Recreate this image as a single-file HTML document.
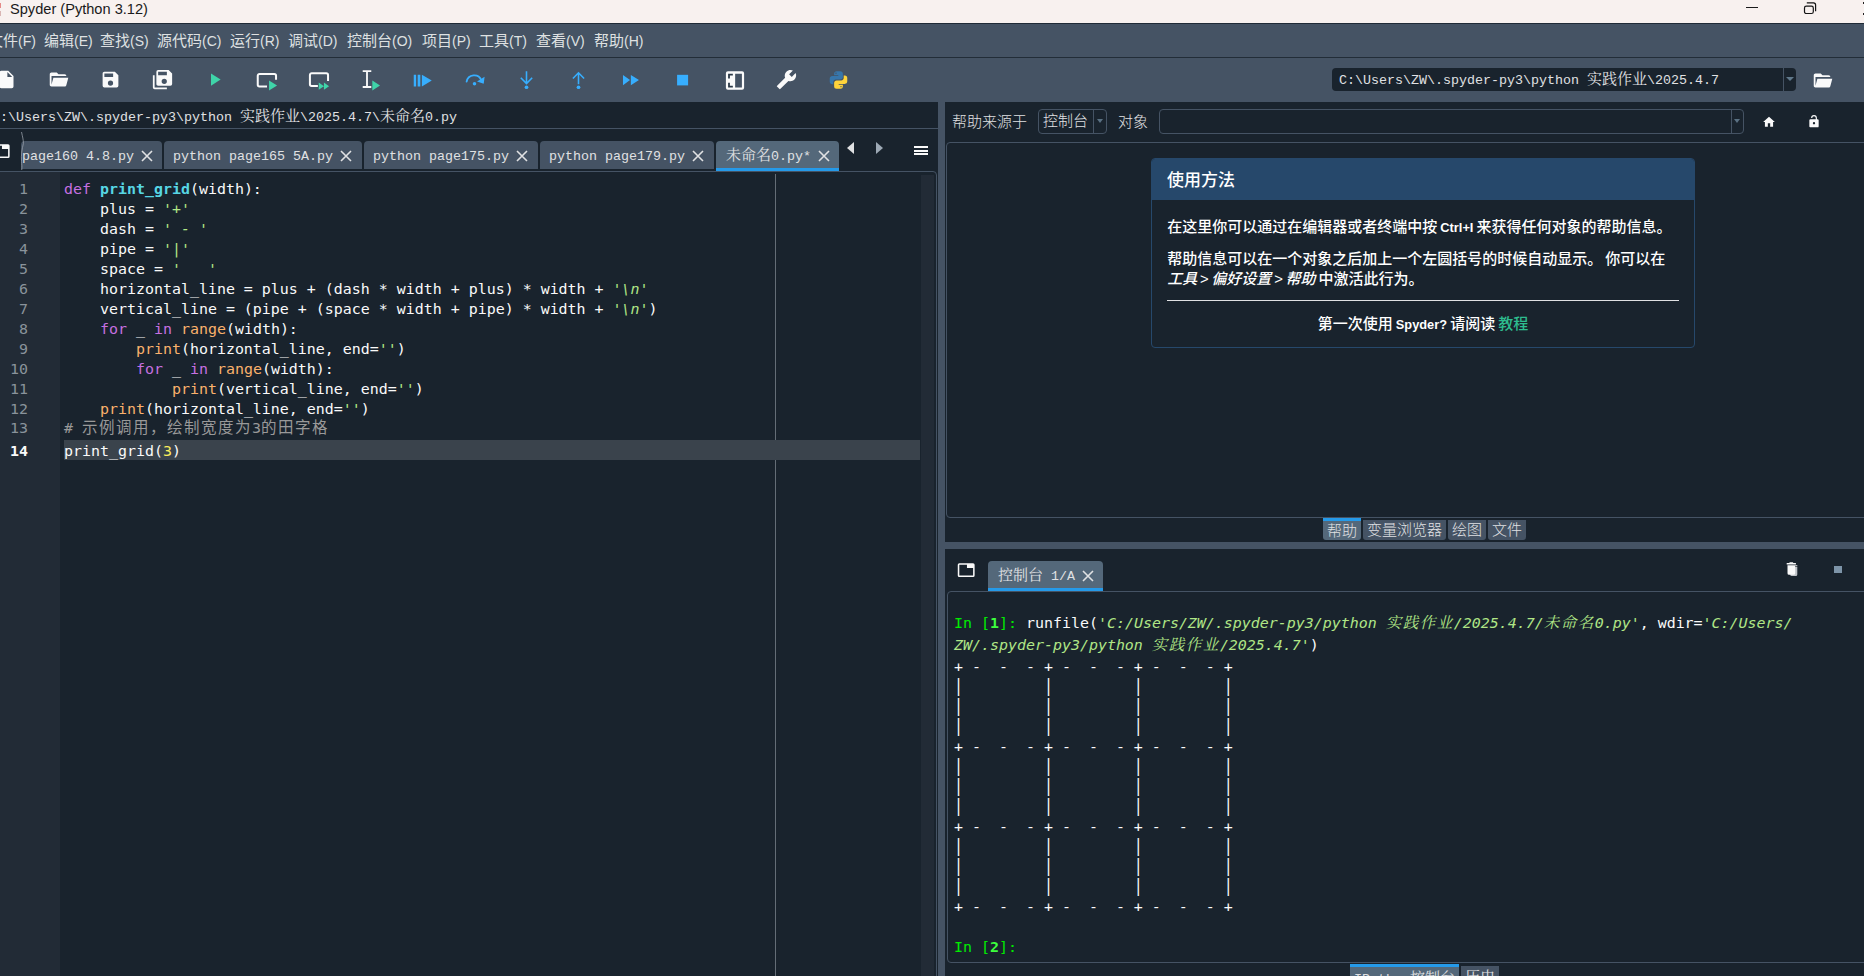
<!DOCTYPE html>
<html lang="zh-CN">
<head>
<meta charset="utf-8">
<title>Spyder (Python 3.12)</title>
<style>
*{box-sizing:border-box;margin:0;padding:0}
html,body{width:1864px;height:976px;overflow:hidden;background:#19232d}
body{position:relative;font-family:"Liberation Sans","Noto Sans CJK SC",sans-serif;color:#e0e1e3}
.abs{position:absolute}
svg{display:block;overflow:visible}
.tab{top:39px;height:28px;background:#455364;border-radius:4px 4px 0 0}
.tab.act{background:#54687a;height:30px;border-bottom:3px solid #259ae9}
.tab .sim{position:absolute;top:1px;line-height:30px}
.tab .x{position:absolute;top:9px;width:12px;height:12px;stroke:#e0e1e3;stroke-width:1.600;fill:none}
#ln{left:0;top:1px;width:28px;color:#8a939b;text-align:right}
#ln div{position:absolute;right:0;height:20px;line-height:20px}
#ln .cur{color:#fafafa;font-weight:bold}
#code{left:64px;top:1px;color:#fafafa}
#code div{position:absolute;left:0;height:20px;line-height:20px}
.k{color:#c670e0}.f{color:#57d6e4;font-weight:bold}.s{color:#b0e686;font-style:italic}.b{color:#fab16c}.n{color:#faed5c}.c{color:#999}
.cj{font-size:15.500px;letter-spacing:1.500px}
/* title bar */
#title{left:0;top:0;width:1864px;height:23px;background:#f8f1ef;color:#1a1a1a}
#title .t{left:10px;top:0;font-size:14.6px;line-height:19px;white-space:nowrap}
/* menubar */
#menubar{left:0;top:23px;width:1864px;height:34px;background:#455364;border-top:1px solid #202b37}
#menubar span{position:absolute;top:-0.500px;line-height:34px;font-size:15px;white-space:nowrap;color:#dfe1e2}
#menubar i{font-style:normal;font-size:14px}
#mline{left:0;top:57px;width:1864px;height:1px;background:#222d38}
#toolbar{left:0;top:58px;width:1864px;height:44px;background:#455364}
.ico{position:absolute;top:11.5px;width:21px;height:21px}
/* simsun-like */
.sim{font-family:"Liberation Mono","Noto Serif CJK SC",monospace;font-size:13.33px;white-space:pre;color:#e0e1e3}
.sim b{font-weight:normal;font-size:15px}
/* code */
.mono{font-family:"DejaVu Sans Mono","Noto Sans CJK SC",monospace;font-size:14.95px;white-space:pre}
.ui{font-size:15px;color:#e0e1e3;white-space:nowrap;font-weight:300}
.yh{font-size:15px;color:#fff;white-space:nowrap;font-weight:500;word-spacing:-1px}
.yh .lat{font-size:12.800px;font-weight:bold}
.yh i{font-style:italic}
.btab{height:20px;background:#455364;color:#e0e1e3;font-size:15px;line-height:20px;font-weight:300;text-align:center;white-space:nowrap;border-radius:0 0 3px 3px}
.btab.act{background:#54687a;height:22px;border-top:3px solid #259ae9;line-height:20px}
.btab .sim{line-height:20px;position:relative;top:1.300px}
#con{left:9px;top:0;color:#fafafa}
#con div{position:absolute;left:0;height:20px;line-height:20px}
#con .pr{transform:translateY(-1.000px) scaleY(1.120)}
#con .cj{font-family:"Noto Serif CJK SC",serif;line-height:0}
#con .p{color:#00ec00}
#con .p b{color:#3dff3d}
#con .s{color:#b0e686;font-style:italic}
</style>
</head>
<body>
<!-- TITLE -->
<div id="title" class="abs">
  <div class="abs" style="left:0;top:3px;width:1.200px;height:5px;background:#e58a88"></div>
  <div class="abs" style="left:0;top:11px;width:1.200px;height:5px;background:#d9b5b3"></div>
  <div class="abs t">Spyder (Python 3.12)</div>
  <div class="abs" style="left:1746px;top:7px;width:12px;height:1px;background:#1a1a1a"></div>
  <svg class="abs" style="left:1803px;top:2px" width="14" height="13" viewBox="0 0 14 13" fill="none" stroke="#141414" stroke-width="1.200"><rect x="1.500" y="4.100" width="8.800" height="7.400" rx="1.800"/><path d="M3.800,0.800H10.500A2.100,2.100 0 0,1 12.600,2.900V9.300"/></svg>
  <div class="abs" style="left:1862.500px;top:2px;width:1.500px;height:2px;background:#222"></div><div class="abs" style="left:1862.500px;top:12.500px;width:1.500px;height:2px;background:#222"></div>
</div>
<!-- MENUBAR -->
<div id="menubar" class="abs">
  <span style="left:-12px">文件<i>(F)</i></span>
  <span style="left:44px">编辑<i>(E)</i></span>
  <span style="left:100px">查找<i>(S)</i></span>
  <span style="left:157px">源代码<i>(C)</i></span>
  <span style="left:230px">运行<i>(R)</i></span>
  <span style="left:288px">调试<i>(D)</i></span>
  <span style="left:347px">控制台<i>(O)</i></span>
  <span style="left:422px">项目<i>(P)</i></span>
  <span style="left:479px">工具<i>(T)</i></span>
  <span style="left:536px">查看<i>(V)</i></span>
  <span style="left:594px">帮助<i>(H)</i></span>
</div>
<div id="mline" class="abs"></div>
<!-- TOOLBAR -->
<div id="toolbar" class="abs">
<!--TB-START-->
<!-- file -->
<svg class="ico" style="margin-top:-0.400px;left:-4px" viewBox="0 0 24 24" fill="#fafafa"><path d="M13,9V3.5L18.5,9M6,2C4.89,2 4,2.89 4,4V20A2,2 0 0,0 6,22H18A2,2 0 0,0 20,20V8L14,2H6Z"/></svg>
<!-- open -->
<svg class="ico" style="margin-top:-0.400px;left:48px" viewBox="0 0 24 24" fill="#fafafa"><path d="M19,20H4C2.89,20 2,19.1 2,18V6C2,4.89 2.89,4 4,4H10L12,6H19A2,2 0 0,1 21,8H21L4,8V18L6.14,10H23.21L20.93,18.5C20.7,19.37 19.92,20 19,20Z"/></svg>
<!-- save -->
<svg class="ico" style="margin-top:-0.400px;left:100px" viewBox="0 0 24 24" fill="#fafafa"><path d="M15,9H5V5H15M12,19A3,3 0 0,1 9,16A3,3 0 0,1 12,13A3,3 0 0,1 15,16A3,3 0 0,1 12,19M17,3H5C3.89,3 3,3.9 3,5V19A2,2 0 0,0 5,21H19A2,2 0 0,0 21,19V7L17,3Z"/></svg>
<!-- save all -->
<svg class="ico" style="margin-top:-0.400px;left:152px" viewBox="0 0 24 24" fill="#fafafa"><path d="M17,7V3H7V7H17M14,17A3,3 0 0,0 17,14A3,3 0 0,0 14,11A3,3 0 0,0 11,14A3,3 0 0,0 14,17M19,1L23,5V17A2,2 0 0,1 21,19H7C5.89,19 5,18.1 5,17V3A2,2 0 0,1 7,1H19M1,7H3V21H17V23H3A2,2 0 0,1 1,21V7Z"/></svg>
<!-- run -->
<svg class="ico" style="margin-top:-0.400px;left:204px" viewBox="0 0 24 24" fill="#3fd4a9"><path d="M8,5.14V19.14L19,12.14L8,5.14Z"/></svg>
<!-- run cell -->
<svg class="ico" style="left:256px" viewBox="0 0 24 24"><path d="M12.600,18.850H4A2,2 0 0,1 2,16.850V6.650A2,2 0 0,1 4,4.650H20.900A2,2 0 0,1 22.900,6.650V11.200" fill="none" stroke="#fafafa" stroke-width="2.300"/><path d="M14.900,12V23.300L24.100,17.650Z" fill="#3fd4a9"/></svg>
<!-- run cell advance -->
<svg class="ico" style="left:308px" viewBox="0 0 24 24"><path d="M11.300,18.150H4.200A2,2 0 0,1 2.200,16.150V5.750A2,2 0 0,1 4.200,3.750H20.900A2,2 0 0,1 22.900,5.750V12.700" fill="none" stroke="#fafafa" stroke-width="2.300"/><path d="M12.300,14.400V22.700L18.200,18.550ZM18.200,14.400V22.700L24.100,18.550Z" fill="#3fd4a9"/></svg>
<!-- run selection -->
<svg class="ico" style="left:360px" viewBox="0 0 24 24"><path d="M3.100,1.300H12.900M3.100,19.400H12.900M8,1.300V19.400" fill="none" stroke="#fafafa" stroke-width="2.100"/><path d="M14.100,11.900V23.300L22.900,17.600Z" fill="#3fd4a9"/></svg>
<!-- debug -->
<svg class="ico" style="left:412px" viewBox="0 0 24 24" fill="#37aefe"><path d="M2,5.3H4.700V18.900H2ZM6.500,5.3H9.500V18.900H6.500ZM11.300,5.3V18.900L22.600,12.100Z"/></svg>
<!-- step over -->
<svg class="ico" style="left:464px" viewBox="0 0 24 24"><path d="M3,13.300A8.800,8.800 0 0,1 19.800,11.600" fill="none" stroke="#37aefe" stroke-width="2.100" stroke-linecap="round"/><path d="M23.500,7.600L22.500,15.600L14.900,13Z" fill="#37aefe"/><circle cx="12" cy="15.800" r="2" fill="#37aefe"/></svg>
<!-- step into -->
<svg class="ico" style="left:516px" viewBox="0 0 24 24"><path d="M12,1.300V15.600M5.500,8.900L12,15.600L18.500,8.900" fill="none" stroke="#37aefe" stroke-width="1.800"/><circle cx="12" cy="19.700" r="2.100" fill="#37aefe"/></svg>
<!-- step out -->
<svg class="ico" style="left:568px" viewBox="0 0 24 24"><path d="M12,16.400V3.200M5.600,9.800L12,3.200L18.400,9.800" fill="none" stroke="#37aefe" stroke-width="1.800"/><circle cx="12" cy="19.700" r="2.100" fill="#37aefe"/></svg>
<!-- continue -->
<svg class="ico" style="left:620px" viewBox="0 0 24 24" fill="#37aefe"><path d="M3.400,5.600V17.400L11.500,11.500ZM12.400,5.600V17.400L21.700,11.500Z"/></svg>
<!-- stop -->
<svg class="ico" style="left:672px" viewBox="0 0 24 24" fill="#37aefe"><path d="M5.800,5.500H18.400V17.600H5.800Z"/></svg>
<!-- maximize pane -->
<svg class="ico" style="left:724px" viewBox="0 0 24 24"><path fill-rule="evenodd" fill="#fafafa" d="M4.470,1.540H20.670A2.300,2.300 0 0,1 22.970,3.840V20.160A2.300,2.300 0 0,1 20.670,22.460H4.470A2.300,2.300 0 0,1 2.170,20.160V3.840A2.300,2.300 0 0,1 4.470,1.540ZM12.740,4.170V20H20.460V4.170Z"/><path fill="#2b3947" d="M4.690,4.170H10.110V6.290H6.740V9.600H4.690ZM4.690,20H10.110V17.890H6.740V14.500H4.690Z"/></svg>
<!-- wrench (mirrored) -->
<svg class="ico" style="margin-top:-0.400px;left:776px" viewBox="0 0 24 24" fill="#fafafa"><g transform="translate(24,0) scale(-1,1)"><path d="M22.700,19L13.600,9.900C14.500,7.600 14,4.900 12.100,3C10.100,1 7.100,0.600 4.700,1.700L9,6L6,9L1.600,4.700C0.400,7.100 0.900,10.100 2.900,12.100C4.800,14 7.500,14.500 9.800,13.600L18.900,22.700C19.300,23.100 19.900,23.100 20.300,22.700L22.600,20.400C23.100,20 23.100,19.300 22.700,19Z"/></g></svg>
<!-- python -->
<svg class="ico" style="margin-top:-0.400px;left:828px" viewBox="0 0 24 24"><path fill="#ffd43b" d="M19.140,7.500A2.860,2.860 0 0,1 22,10.360V14.140A2.860,2.860 0 0,1 19.140,17H12C12,17.390 12.320,17.960 12.710,17.960H17V19.640A2.860,2.860 0 0,1 14.140,22.500H9.860A2.860,2.860 0 0,1 7,19.640V15.890C7,14.310 8.280,13.040 9.860,13.040H15.110C16.690,13.040 17.960,11.760 17.960,10.180V7.500H19.140M14.860,19.290C14.460,19.290 14.140,19.590 14.140,20.180C14.140,20.770 14.460,20.890 14.860,20.890A0.710,0.710 0 0,0 15.570,20.180C15.570,19.590 15.250,19.290 14.860,19.290Z"/><path fill="#3776ab" d="M4.860,17.500C3.280,17.500 2,16.220 2,14.640V10.860C2,9.280 3.280,8 4.860,8H12C12,7.610 11.680,7.040 11.290,7.040H7V5.360C7,3.780 8.280,2.500 9.860,2.500H14.140C15.720,2.500 17,3.780 17,5.360V9.110C17,10.690 15.720,11.960 14.140,11.960H8.890C7.310,11.960 6.040,13.240 6.040,14.820V17.500H4.860M9.140,5.710C9.540,5.710 9.860,5.410 9.860,4.820C9.860,4.230 9.540,4.110 9.140,4.110C8.750,4.110 8.430,4.230 8.430,4.820C8.430,5.410 8.750,5.710 9.140,5.710Z"/></svg>
<!-- working dir combo -->
<div class="abs" style="left:1332px;top:10px;width:464px;height:23px;background:#19232d;border-radius:4px"></div>
<div class="abs" style="left:1783px;top:10px;width:1px;height:23px;background:#455364"></div>
<div class="abs" style="left:1786px;top:19px;width:0;height:0;border-left:4px solid transparent;border-right:4px solid transparent;border-top:4px solid #60798b"></div>
<div class="abs sim" style="left:1339px;top:11px;line-height:23px">C:\Users\ZW\.spyder-py3\python <b>实践作业</b>\2025.4.7</div>
<svg class="abs" style="left:1811.500px;top:11.500px;width:21px;height:21px" viewBox="0 0 24 24" fill="#fafafa"><path d="M19,20H4C2.890,20 2,19.100 2,18V6C2,4.890 2.890,4 4,4H10L12,6H19A2,2 0 0,1 21,8H21L4,8V18L6.140,10H23.210L20.930,18.500C20.700,19.370 19.920,20 19,20Z"/></svg>
<!--TB-END-->
</div>
<!-- EDITOR PANE -->
<div id="editor" class="abs" style="left:0;top:102px;width:938px;height:874px">
<!--ED-START-->
<!-- path bar -->
<div class="abs sim" style="left:-8px;top:4.500px;line-height:22px">C:\Users\ZW\.spyder-py3\python <b>实践作业</b>\2025.4.7\<b>未命名</b>0.py</div>
<div class="abs" style="left:0;top:26px;width:938px;height:1px;background:#455364"></div>
<!-- tab bar -->
<svg class="abs" style="left:-8.400px;top:39.500px;width:18.400px;height:18.400px" viewBox="0 0 24 24" fill="#fafafa"><path d="M21,3H3A2,2 0 0,0 1,5V19A2,2 0 0,0 3,21H21A2,2 0 0,0 23,19V5A2,2 0 0,0 21,3M21,19H3V5H13V9H21V19Z"/></svg>
<div class="abs tab" style="left:21px;width:141px"><span class="sim" style="left:1px">page160 4.8.py</span><svg class="x" style="left:120px" viewBox="0 0 12 12"><path d="M1,1L11,11M11,1L1,11"/></svg></div>
<svg class="abs" style="left:19px;top:30px;overflow:hidden" width="6" height="38" viewBox="0 0 6 40"><path d="M2.500,0C3.500,5 4.500,8 4.500,12C3,18 2,24 2.500,31C2.800,34 3.200,37 2.700,40" fill="none" stroke="#9aa3ac" stroke-width="0.8"/></svg>
<div class="abs tab" style="left:164px;width:198px"><span class="sim" style="left:9px">python page165 5A.py</span><svg class="x" style="left:176px" viewBox="0 0 12 12"><path d="M1,1L11,11M11,1L1,11"/></svg></div>
<div class="abs tab" style="left:364px;width:174px"><span class="sim" style="left:9px">python page175.py</span><svg class="x" style="left:152px" viewBox="0 0 12 12"><path d="M1,1L11,11M11,1L1,11"/></svg></div>
<div class="abs tab" style="left:540px;width:174px"><span class="sim" style="left:9px">python page179.py</span><svg class="x" style="left:152px" viewBox="0 0 12 12"><path d="M1,1L11,11M11,1L1,11"/></svg></div>
<div class="abs tab act" style="left:716px;width:123px"><span class="sim" style="left:10px"><b>未命名</b>0.py*</span><svg class="x" style="left:102px" viewBox="0 0 12 12"><path d="M1,1L11,11M11,1L1,11"/></svg></div>
<div class="abs" style="left:847px;top:40px;width:0;height:0;border-top:6.500px solid transparent;border-bottom:6.500px solid transparent;border-right:7.500px solid #e0e1e3"></div>
<div class="abs" style="left:876px;top:40px;width:0;height:0;border-top:6.500px solid transparent;border-bottom:6.500px solid transparent;border-left:7.500px solid #9da9b5"></div>
<div class="abs" style="left:914px;top:43.700px;width:14px;height:2px;background:#fafafa"></div>
<div class="abs" style="left:914px;top:47.500px;width:14px;height:2px;background:#fafafa"></div>
<div class="abs" style="left:914px;top:51.300px;width:14px;height:2px;background:#fafafa"></div>
<!-- editor frame -->
<div class="abs" style="left:-4px;top:69px;width:941px;height:812px;border:1px solid #455364;border-radius:4px"></div>
<div class="abs" style="left:0;top:70px;width:60px;height:804px;background:#222b36"></div>
<div class="abs" style="left:921px;top:73px;width:13px;height:801px;background:#222b36"></div>
<div class="abs" style="left:775px;top:72px;width:1px;height:802px;background:#646d76"></div>
<div class="abs" style="left:64px;top:338px;width:856px;height:20px;background:#3a434c"></div>
<div id="ln" class="abs mono">
<div style="top:76px">1</div><div style="top:96px">2</div><div style="top:116px">3</div><div style="top:136px">4</div><div style="top:156px">5</div><div style="top:176px">6</div><div style="top:196px">7</div><div style="top:216px">8</div><div style="top:236px">9</div><div style="top:256px">10</div><div style="top:276px">11</div><div style="top:296px">12</div><div style="top:315px">13</div><div class="cur" style="top:338px">14</div>
</div>
<div id="code" class="abs mono">
<div style="top:76px"><span class="k">def</span> <span class="f">print_grid</span>(width):</div>
<div style="top:96px">    plus = <span class="s">'+'</span></div>
<div style="top:116px">    dash = <span class="s">' - '</span></div>
<div style="top:136px">    pipe = <span class="s">'|'</span></div>
<div style="top:156px">    space = <span class="s">'   '</span></div>
<div style="top:176px">    horizontal_line = plus + (dash * width + plus) * width + <span class="s">'\n'</span></div>
<div style="top:196px">    vertical_line = (pipe + (space * width + pipe) * width + <span class="s">'\n'</span>)</div>
<div style="top:216px">    <span class="k">for</span> _ <span class="k">in</span> <span class="b">range</span>(width):</div>
<div style="top:236px">        <span class="b">print</span>(horizontal_line, end=<span class="s">''</span>)</div>
<div style="top:256px">        <span class="k">for</span> _ <span class="k">in</span> <span class="b">range</span>(width):</div>
<div style="top:276px">            <span class="b">print</span>(vertical_line, end=<span class="s">''</span>)</div>
<div style="top:296px">    <span class="b">print</span>(horizontal_line, end=<span class="s">''</span>)</div>
<div class="c" style="top:315px"># <span class="cj">示例调用，绘制宽度为</span>3<span class="cj">的田字格</span></div>
<div style="top:338px">print_grid(<span class="n">3</span>)</div>
</div>
<!--ED-END-->
</div>
<!-- vertical splitter -->
<div class="abs" style="left:938px;top:102px;width:7px;height:874px;background:#455364"></div>
<!-- HELP PANE -->
<div id="help" class="abs" style="left:945px;top:102px;width:919px;height:439px">
<!--HELP-START-->
<!-- help toolbar -->
<div class="abs ui" style="left:7px;top:7px;line-height:26px">帮助来源于</div>
<div class="abs" style="left:93px;top:7px;width:69px;height:25px;border:1px solid #455364;border-radius:4px"></div>
<div class="abs ui" style="left:98px;top:6px;line-height:26px">控制台</div>
<div class="abs" style="left:148px;top:8px;width:1px;height:23px;background:#455364"></div>
<div class="abs" style="left:151.500px;top:17px;width:0;height:0;border-left:3.800px solid transparent;border-right:3.800px solid transparent;border-top:4px solid #5a7183"></div>
<div class="abs ui" style="left:173px;top:7px;line-height:26px">对象</div>
<div class="abs" style="left:214px;top:7px;width:585px;height:25px;border:1px solid #455364;border-radius:4px"></div>
<div class="abs" style="left:786px;top:8px;width:1px;height:23px;background:#455364"></div>
<div class="abs" style="left:788.500px;top:17px;width:0;height:0;border-left:3.800px solid transparent;border-right:3.800px solid transparent;border-top:4px solid #5a7183"></div>
<svg class="abs" style="left:817px;top:13px;width:14px;height:14px" viewBox="0 0 24 24" fill="#fafafa"><path d="M10,20V14H14V20H19V12H22L12,3L2,12H5V20H10Z"/></svg>
<svg class="abs" style="left:862px;top:12px;width:14px;height:15px" viewBox="0 0 24 24" fill="#fafafa"><path d="M18,8A2,2 0 0,1 20,10V20A2,2 0 0,1 18,22H6C4.890,22 4,21.100 4,20V10A2,2 0 0,1 6,8H15V6A3,3 0 0,0 12,3A3,3 0 0,0 9,6H7A5,5 0 0,1 12,1A5,5 0 0,1 17,6V8H18M12,17A2,2 0 0,0 14,15A2,2 0 0,0 12,13A2,2 0 0,0 10,15A2,2 0 0,0 12,17Z"/></svg>
<!-- help frame -->
<div class="abs" style="left:1px;top:40px;width:930px;height:376px;border:1px solid #455364;border-radius:4px"></div>
<!-- card -->
<div class="abs" style="left:206px;top:56px;width:544px;height:190px;border:1px solid #26486b;border-radius:4px;overflow:hidden">
  <div class="abs" style="left:0;top:0;width:544px;height:41px;background:#26486b"></div>
  <div class="abs yh" style="left:15px;top:10px;font-size:17px;line-height:24px;font-weight:500">使用方法</div>
  <div class="abs yh" style="left:15.200px;top:58px;line-height:20px">在这里你可以通过在编辑器或者终端中按 <b class="lat">Ctrl+I</b> 来获得任何对象的帮助信息。</div>
  <div class="abs yh" style="left:15.200px;top:90px;line-height:20px">帮助信息可以在一个对象之后加上一个左圆括号的时候自动显示。 你可以在<br><i style="word-spacing:-1.500px">工具 &gt; 偏好设置 &gt; 帮助</i> 中激活此行为。</div>
  <div class="abs" style="left:15px;top:141px;width:512px;height:1px;background:#e0e1e3"></div>
  <div class="abs yh" style="left:0;top:155px;width:542px;text-align:center;line-height:20px">第一次使用 <b class="lat">Spyder?</b> 请阅读 <span style="color:#2ebd8f">教程</span></div>
</div>
<!-- bottom tabs -->
<div class="abs btab act" style="left:378px;top:416px;width:38px">帮助</div>
<div class="abs btab" style="left:418px;top:418px;width:83px">变量浏览器</div>
<div class="abs btab" style="left:503px;top:418px;width:38px">绘图</div>
<div class="abs btab" style="left:543px;top:418px;width:38px">文件</div>
<!--HELP-END-->
</div>
<!-- horizontal splitter -->
<div class="abs" style="left:945px;top:542px;width:919px;height:7px;background:#455364"></div>
<!-- CONSOLE PANE -->
<div id="console" class="abs" style="left:945px;top:548px;width:919px;height:428px">
<!--CON-START-->
<svg class="abs" style="left:11.800px;top:13.200px;width:18.400px;height:18.400px" viewBox="0 0 24 24" fill="#fafafa"><path d="M21,3H3A2,2 0 0,0 1,5V19A2,2 0 0,0 3,21H21A2,2 0 0,0 23,19V5A2,2 0 0,0 21,3M21,19H3V5H13V9H21V19Z"/></svg>
<div class="abs tab act" style="left:43px;top:13px;width:115px"><span class="sim" style="left:10px"><b>控制台</b> 1/A</span><svg class="x" style="left:94px" viewBox="0 0 12 12"><path d="M1,1L11,11M11,1L1,11"/></svg></div>
<svg class="abs" style="left:841px;top:14px" width="13" height="15" viewBox="0 0 13 15"><path d="M4.200,5H11.300V12.500A1.500,1.500 0 0,1 9.800,14H5.700A1.500,1.500 0 0,1 4.200,12.500Z" fill="#c0c4c8"/><path d="M0.700,1H3.200L3.800,0.300H6.800L7.400,1H9.900V2.400H0.700ZM1.500,3.300H9.200V11.200A1.500,1.500 0 0,1 7.700,12.700H3A1.500,1.500 0 0,1 1.500,11.200Z" fill="#fafafa"/><path d="M9.200,3.800H11.300" stroke="#fafafa" stroke-width="1"/></svg>
<div class="abs" style="left:889px;top:18px;width:8px;height:7px;background:#7d94a8"></div>
<!-- console frame -->
<div class="abs" style="left:2px;top:43px;width:930px;height:372px;border:1px solid #455364;border-radius:4px"></div>
<div id="con" class="abs mono">
<div style="top:64px;height:22px;line-height:22px"><span class="p">In [<b>1</b>]:</span> runfile(<span class="s">'C:/Users/ZW/.spyder-py3/python <span class="cj">实践作业</span>/2025.4.7/<span class="cj">未命名</span>0.py'</span>, wdir=<span class="s">'C:/Users/</span></div>
<div style="top:86px;height:22px;line-height:22px"><span class="s">ZW/.spyder-py3/python <span class="cj">实践作业</span>/2025.4.7'</span>)</div>
<div style="top:109px">+ -  -  - + -  -  - + -  -  - +</div>
<div class="pr" style="top:129px">|         |         |         |</div>
<div class="pr" style="top:149px">|         |         |         |</div>
<div class="pr" style="top:169px">|         |         |         |</div>
<div style="top:189px">+ -  -  - + -  -  - + -  -  - +</div>
<div class="pr" style="top:209px">|         |         |         |</div>
<div class="pr" style="top:229px">|         |         |         |</div>
<div class="pr" style="top:249px">|         |         |         |</div>
<div style="top:269px">+ -  -  - + -  -  - + -  -  - +</div>
<div class="pr" style="top:289px">|         |         |         |</div>
<div class="pr" style="top:309px">|         |         |         |</div>
<div class="pr" style="top:329px">|         |         |         |</div>
<div style="top:349px">+ -  -  - + -  -  - + -  -  - +</div>
<div style="top:389px"><span class="p">In [<b>2</b>]:</span></div>
</div>
<!-- bottom tabs -->
<div class="abs btab act sim2" style="left:405px;top:416px;width:109px;height:14px"><span class="sim">IPython<b>控制台</b></span></div>
<div class="abs btab sim2" style="left:516px;top:418px;width:38px;height:14px"><span class="sim"><b>历史</b></span></div>
<!--CON-END-->
</div>
</body>
</html>
